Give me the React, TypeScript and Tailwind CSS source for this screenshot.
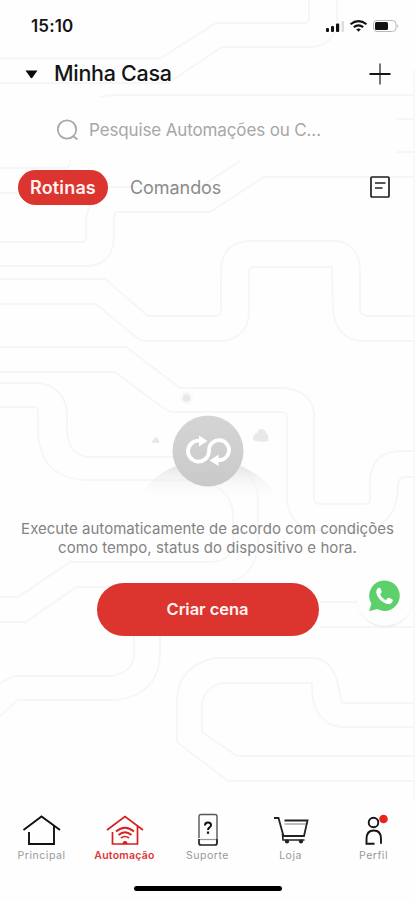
import React from "react";

const circuitLines = [
  "M0 58.5H160L216 23H305Q309 23 309 18V0",
  "M0 83H168L222 47H312Q336 45 337 20V0",
  "M100 97Q108 95 115 95H415",
  "M396 119H415M396 152H415",
  "M0 168H66Q70 168 70 160M0 193H18",
  "M415 177H264L210 212H118Q114 212 114 218V238Q112 265 88 266H0",
  "M240 161L200 187H110Q88 198 86 220V238Q86 242 82 242H0",
  "M0 279H105L148 316H215Q221 316 221 309V270Q222 242 250 241H338Q359 245 360 270V310Q362 316 368 316H415",
  "M0 304H96L137 338L144 341H222Q248 338 249 312V272Q249 267 254 267H332L333 312Q338 340 362 341H415",
  "M0 347H126L180 388H285Q313 392 314 415V498Q314 504 320 504H366Q370 504 370 499V480Q372 452 400 451H415",
  "M0 372H115L162 407L171 412H281Q287 412 287 418V500Q290 525 312 530H370Q398 520 398 485Q398 477 406 477H415",
  "M0 383H40Q66 388 67 415V430Q68 455 88 457H208Q255 460 258 500V545Q255 575 232 581",
  "M0 407H35Q38 407 38 411V435Q42 478 85 480H200Q232 488 233 515V545Q230 562 210 562H70L18 597H0",
  "M0 622H26L76 587H120",
  "M320 602H358M320 627H415",
  "M0 683L14 676H112Q133 672 134 655V636",
  "M0 716L18 700H115Q158 696 160 655V636",
  "M415 703H342L338 685Q333 661 315 658H215Q178 666 177 700V742L228 781H415",
  "M415 727H340Q313 722 312 690V683H222Q203 688 202 705V732L237 756H415",
  "M414.5 70V800",
];

function CircuitBackground() {
  return (
    <svg className="absolute inset-0" width="415" height="900" viewBox="0 0 415 900" fill="none" stroke="#f6f6f6" strokeWidth="1.8">
      {circuitLines.map((d) => (
        <path key={d} d={d} />
      ))}
    </svg>
  );
}

function StatusBar() {
  return (
    <div className="flex h-[52px] items-center justify-between pr-[15px] pl-[31px]">
      <span className="pt-[2px] text-[17px] font-semibold tracking-[0.15px] text-[#151515]">15:10</span>
      <svg width="75" height="16" viewBox="0 0 75 16">
        <g fill="#111">
          <rect x="1" y="10" width="3" height="4" rx="1" />
          <rect x="6" y="8" width="3" height="6" rx="1" />
          <rect x="11" y="5.5" width="3.2" height="8.5" rx="1" />
        </g>
        <rect x="16.5" y="3" width="2.5" height="11" rx="1" fill="#ddd" />
        <g fill="none" stroke="#111" strokeWidth="2.1">
          <path d="M25.5 6.2Q33.5 -0.1 41.5 6.2" />
          <path d="M28.8 9.2Q33.5 5.5 38.2 9.2" />
        </g>
        <path d="M31.2 11.3Q33.5 9.5 35.8 11.3L33.5 13.7Z" fill="#111" />
        <rect x="48.5" y="2.5" width="22.5" height="11" rx="3.5" fill="#fff" stroke="#b8b8b8" />
        <rect x="50" y="4" width="13" height="8" rx="1.5" fill="#111" />
        <path d="M72.5 6V10Q74.3 8 72.5 6Z" fill="#999" />
      </svg>
    </div>
  );
}

function Header() {
  return (
    <header className="flex h-11 items-center pr-[23px] pl-[25px]">
      <svg width="13" height="9" viewBox="0 0 13 9">
        <path d="M0.5 0.5H12.5L7.5 7.5Q6.5 8.8 5.5 7.5Z" fill="#080808" />
      </svg>
      <h1 className="ml-4 flex-1 text-[21.5px] leading-none font-medium tracking-[-0.3px] text-[#151515]">Minha Casa</h1>
      <svg width="24" height="24" viewBox="0 0 24 24" fill="none">
        <path d="M12 1.5V22.5" stroke="#777" strokeWidth="2" />
        <path d="M1.5 12H22.5" stroke="#151515" strokeWidth="2" />
      </svg>
    </header>
  );
}

function SearchField() {
  return (
    <div className="mx-[18px] mt-3 flex h-[44px] items-center bg-[#fefefe] pl-[38px] text-[#a7a7a7]">
      <svg width="23" height="22" viewBox="0 0 23 22" fill="none" stroke="#aaa" strokeWidth="1.8">
        <circle cx="11" cy="10.5" r="9.2" />
        <path d="M17 17L21.5 20.5" />
      </svg>
      <span className="ml-[10px] text-[17px] leading-none tracking-[-0.13px]">Pesquise Automações ou C...</span>
    </div>
  );
}

function Tabs() {
  return (
    <div className="mt-[17px] flex h-9 items-center pr-[25px] pl-[18px]">
      <button className="h-[35px] w-[90px] rounded-full bg-[#dc3530] pt-px text-[18px] leading-none font-semibold tracking-[0.15px] text-[#fff3f2]">Rotinas</button>
      <span className="ml-[22px] flex-1 pt-px text-[18px] leading-none tracking-[-0.06px] text-[#8b8b8b]">Comandos</span>
      <svg width="20" height="22" viewBox="0 0 20 22" fill="none" stroke="#202020" strokeWidth="1.7">
        <rect x="1" y="1" width="18" height="20" rx="1" />
        <path d="M5 7H15.5M5 12H12.5" />
      </svg>
    </div>
  );
}

function SceneIllustration() {
  return (
    <svg width="150" height="120" viewBox="133 385 150 120">
      <defs>
        <linearGradient id="hill" x1="0" y1="0" x2="0" y2="1">
          <stop stopColor="#dedede" />
          <stop offset="1" stopColor="#fff" stopOpacity="0" />
        </linearGradient>
        <linearGradient id="disc" x1="0" y1="0" x2="0" y2="1">
          <stop stopColor="#d5d5d5" />
          <stop offset="1" stopColor="#c9c9c9" />
        </linearGradient>
      </defs>
      <path d="M138 502C148 476 176 460 208 460C242 460 268 477 279 502Z" fill="url(#hill)" />
      <circle cx="186.5" cy="398" r="6.5" fill="#f9f9f9" />
      <circle cx="186.5" cy="398" r="3.8" fill="#e8e8e8" />
      <path d="M152 443Q152 440 154 439Q156 435 158 439Q160 441 159 443Z" fill="#e8e8e8" />
      <path d="M253 440Q253 433 257 433Q258 429 262 429Q266 430 266 433Q269 434 268 441Q260 443 253 440Z" fill="#e8e8e8" />
      <circle cx="208" cy="451" r="35.5" fill="url(#disc)" />
      <path
        d="M201 440.9A10.5 10.5 0 1 0 209 451.5V450A10 10 0 1 1 216 459.7"
        fill="none"
        stroke="#fff"
        strokeWidth="3.8"
      />
      <path d="M199 435.5L207.5 441L199 446.5ZM218.5 454.5L209.5 460.5L218.5 466Z" fill="#fff" />
    </svg>
  );
}

function WhatsAppButton() {
  return (
    <button className="absolute top-[570px] left-[357px] flex h-14 w-[56px] items-center justify-center rounded-full bg-[#fefefe] shadow-[0_2px_2px_-1px_#e8e8e8]">
      <svg className="-translate-x-[1.5px] -translate-y-[2.5px]" width="33" height="33" viewBox="0 0 34 34">
        <path d="M17.5 1A15.7 15.7 0 1 1 10 30.5L1.7 32.6L4 24.8A15.7 15.7 0 0 1 17.5 1Z" fill="#5bd06b" />
        <path d="M12 8.5C10.5 8.5 9 10.5 9 13C9 18.5 16.5 25.5 21.5 25.3C24.5 25.3 26.5 22.5 26 20.8C25.5 20 22.5 18.8 21.5 18.7C20.5 18.7 19.5 21.5 18.5 21C16 20 14 17.5 13 15.3C13 14.5 15 13.5 14.7 12.5L13.3 9C13 8.5 12.6 8.4 12 8.5Z" fill="#fff" />
      </svg>
    </button>
  );
}

function HouseIcon() {
  return (
    <svg width="40" height="32" viewBox="0 0 40 32" fill="none" stroke="#111" strokeWidth="1.9">
      <path d="M1.5 16L19.5 2.5L38 16" />
      <path d="M7 18V30H32V12" />
    </svg>
  );
}

function AutomationIcon() {
  return (
    <svg width="40" height="32" viewBox="0 0 40 32" fill="none" stroke="#d91e1e" strokeWidth="1.7">
      <path d="M2 16L20 2.5L38 16M7.5 18V30H32.5V12" />
      <path d="M11 17.5Q20 10 29 17.5M13.5 21Q20 15.5 26.5 21M16 24Q20 21 24 24" />
      <path d="M17.5 30Q17.5 27 20 27Q22.5 27 22.5 30Z" fill="#d91e1e" stroke="none" />
    </svg>
  );
}

function SupportIcon() {
  return (
    <svg width="22" height="34" viewBox="0 0 22 34" fill="none">
      <path d="M2 25V3.5Q2 1.5 4 1.5H18Q20 1.5 20 3.5V30" stroke="#555" strokeWidth="1.4" />
      <path d="M2 26.5H20" stroke="#999" strokeWidth="1.2" />
      <path d="M2 26V30Q2 32 4 32H18Q20 32 20 30V26" stroke="#222" strokeWidth="1.7" />
      <path d="M8 12.5Q8 9.5 11 9.5Q14 9.5 14 12Q14 13.5 12.5 14.5Q11 15.3 11 17" stroke="#111" strokeWidth="2" />
      <path d="M11 18.5V20.8" stroke="#111" strokeWidth="2.2" />
    </svg>
  );
}

function CartIcon() {
  return (
    <svg width="36" height="30" viewBox="0 0 36 30" fill="none" stroke="#222" strokeWidth="1.8">
      <path d="M1 3H5.5L10.5 21H31L34.5 5.5H11.5" />
      <path d="M11.5 9H33" stroke="#999" strokeWidth="1.3" />
      <path d="M9.5 19L10 25H31.5" strokeWidth="1.6" />
      <circle cx="14" cy="26.5" r="2.1" fill="#222" stroke="none" />
      <circle cx="28" cy="26.5" r="2.1" fill="#222" stroke="none" />
    </svg>
  );
}

function ProfileIcon() {
  return (
    <svg className="translate-x-[2px]" width="26" height="32" viewBox="0 0 26 32" fill="none" stroke="#151515" strokeWidth="1.9">
      <circle cx="10.5" cy="8.5" r="4.8" />
      <path d="M11.5 29.8H3.5V25C3.5 19.5 6 16.5 10.8 16.5C15.5 16.5 18 19.5 18 25V29.8" />
      <circle cx="20.5" cy="5" r="4.3" fill="#e9221c" stroke="none" />
    </svg>
  );
}

const navItems = [
  { label: "Principal", icon: <HouseIcon />, style: "text-[10.5px] text-[#999] tracking-[0.55px]" },
  { label: "Automação", icon: <AutomationIcon />, style: "text-[10.5px] font-semibold text-[#dc3838] tracking-[0.25px]" },
  { label: "Suporte", icon: <SupportIcon />, style: "text-[10.5px] text-[#999] tracking-[0.55px]" },
  { label: "Loja", icon: <CartIcon />, style: "text-[10.5px] text-[#999] tracking-[0.5px]" },
  { label: "Perfil", icon: <ProfileIcon />, style: "text-[10.5px] text-[#999] tracking-[0.5px]" },
];

function BottomNav() {
  return (
    <nav className="grid grid-cols-5">
      {navItems.map((item) => (
        <div key={item.label} className="flex flex-col items-center">
          <div className="flex h-9 items-center">{item.icon}</div>
          <span className={`mt-[2px] h-3 leading-3 ${item.style}`}>{item.label}</span>
        </div>
      ))}
    </nav>
  );
}

export default function App() {
  return (
    <div className="relative h-[900px] w-[415px] overflow-hidden bg-[#fefefe] font-['Inter','Liberation_Sans',sans-serif]">
      <CircuitBackground />
      <div className="relative flex h-full flex-col">
        <StatusBar />
        <Header />
        <SearchField />
        <Tabs />
        <main className="mt-[180px] flex flex-col items-center">
          <SceneIllustration />
          <p className="mt-[14px] text-center text-[15px] leading-[19px] whitespace-nowrap text-[#838383]">
            <span className="tracking-[0.02px]">Execute automaticamente de acordo com condições</span>
            <br />
            <span className="tracking-[0.06px]">como tempo, status do dispositivo e hora.</span>
          </p>
          <button className="mt-[26px] h-[53px] w-[222px] rounded-full bg-[#dc3530] text-[16.5px] font-semibold tracking-[-0.05px] text-[#fff3f2]">Criar cena</button>
        </main>
        <div className="mt-auto">
          <BottomNav />
          <div className="mx-auto mt-[24px] mb-[9px] h-[5px] w-[148px] rounded-full bg-black" />
        </div>
      </div>
      <WhatsAppButton />
    </div>
  );
}
